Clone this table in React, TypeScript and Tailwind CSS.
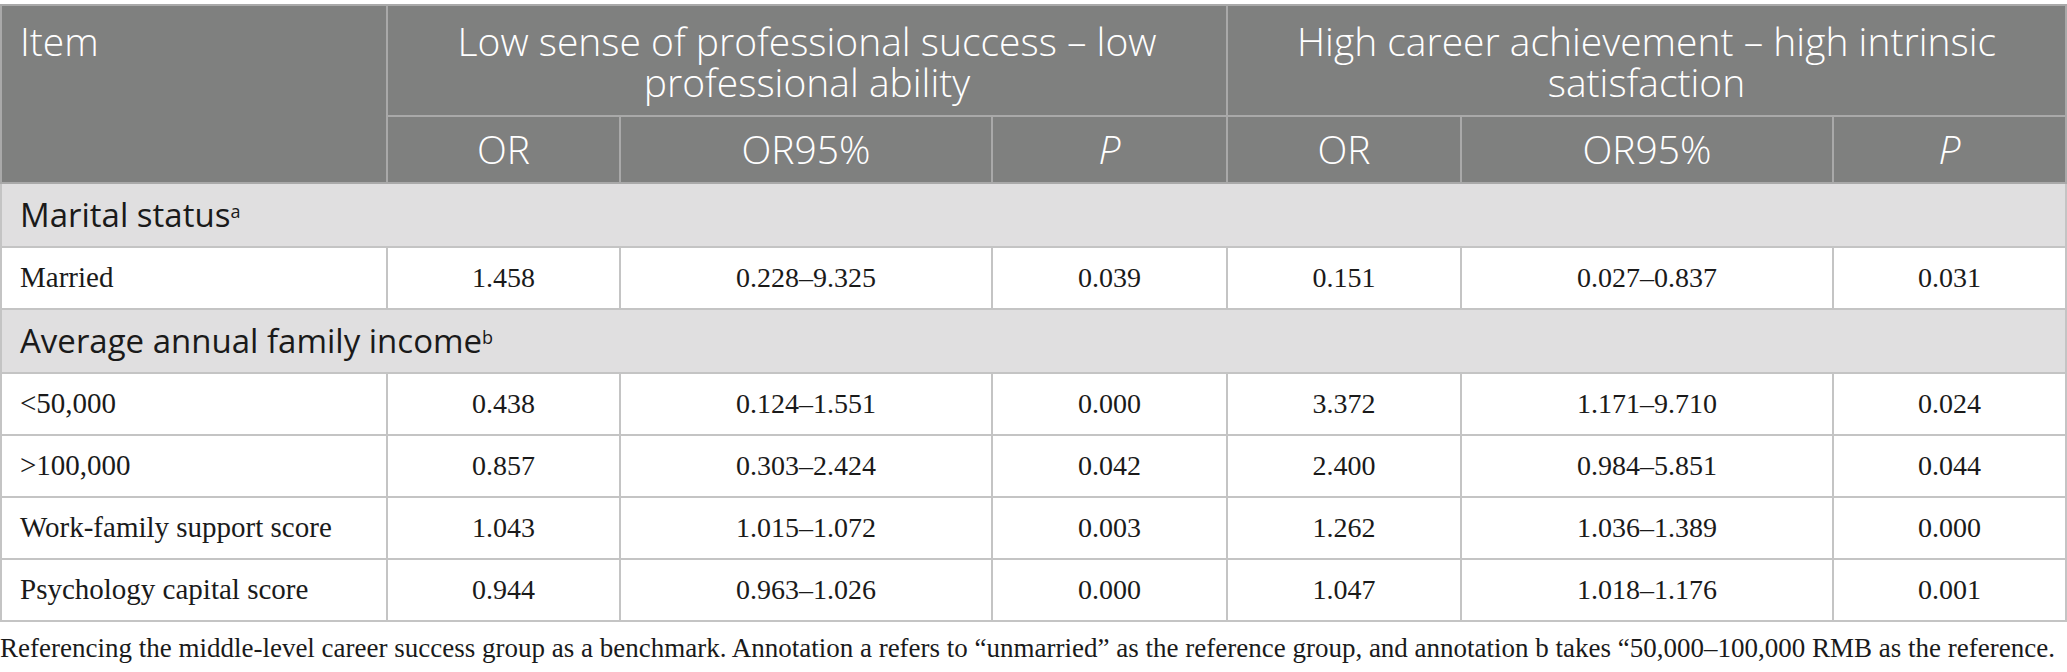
const headerFont = { fontFamily: '"Open Sans", "Liberation Sans", sans-serif' };
const serifFont = { fontFamily: '"Liberation Serif", "Times New Roman", serif' };

type Row = { label: string; v: string[] };

const marital: Row[] = [
  { label: "Married", v: ["1.458", "0.228–9.325", "0.039", "0.151", "0.027–0.837", "0.031"] },
];

const income: Row[] = [
  { label: "<50,000", v: ["0.438", "0.124–1.551", "0.000", "3.372", "1.171–9.710", "0.024"] },
  { label: ">100,000", v: ["0.857", "0.303–2.424", "0.042", "2.400", "0.984–5.851", "0.044"] },
  { label: "Work-family support score", v: ["1.043", "1.015–1.072", "0.003", "1.262", "1.036–1.389", "0.000"] },
  { label: "Psychology capital score", v: ["0.944", "0.963–1.026", "0.000", "1.047", "1.018–1.176", "0.001"] },
];

const DataRow = ({ row }: { row: Row }) => (
  <tr className="h-[62px] bg-white text-[28px] text-[#1a1a1a]" style={serifFont}>
    <td className="border-2 border-[#c4c4c4] pl-[18px] text-left text-[29px]">{row.label}</td>
    {row.v.map((x, i) => (
      <td key={i} className="border-2 border-[#c4c4c4] text-center">
        {x}
      </td>
    ))}
  </tr>
);

const GroupRow = ({ label, sup }: { label: string; sup: string }) => (
  <tr className="h-[64px] bg-[#e0dfe0] text-[33px] text-[#1a1a1a]" style={headerFont}>
    <td colSpan={7} className="border-2 border-[#c4c4c4] pl-[18px] text-left">
      {label}
      <sup className="text-[18px]">{sup}</sup>
    </td>
  </tr>
);

export default function App() {
  return (
    <div className="w-[2067px] h-[672px] bg-white pt-[4px]">
      <table className="w-[2065px] table-fixed border-collapse">
        <colgroup>
          <col className="w-[386px]" />
          <col className="w-[233px]" />
          <col className="w-[372px]" />
          <col className="w-[235px]" />
          <col className="w-[234px]" />
          <col className="w-[372px]" />
          <col className="w-[233px]" />
        </colgroup>
        <thead className="bg-[#7f807f] text-white text-[39px] font-light" style={headerFont}>
          <tr className="h-[111px]">
            <td rowSpan={2} className="border-2 border-[#a9a9a9] pl-[18px] pt-[14px] align-top text-left leading-[41px]">
              Item
            </td>
            <td colSpan={3} className="border-2 border-[#a9a9a9] px-[20px] pt-[14px] align-top text-center leading-[41px]">
              Low sense of professional success – low professional ability
            </td>
            <td colSpan={3} className="border-2 border-[#a9a9a9] px-[20px] pt-[14px] align-top text-center leading-[41px]">
              High career achievement – high intrinsic satisfaction
            </td>
          </tr>
          <tr className="h-[67px]">
            <td className="border-2 border-[#a9a9a9] text-center">OR</td>
            <td className="border-2 border-[#a9a9a9] text-center">OR95%</td>
            <td className="border-2 border-[#a9a9a9] text-center italic">P</td>
            <td className="border-2 border-[#a9a9a9] text-center">OR</td>
            <td className="border-2 border-[#a9a9a9] text-center">OR95%</td>
            <td className="border-2 border-[#a9a9a9] text-center italic">P</td>
          </tr>
        </thead>
        <tbody>
          <GroupRow label="Marital status" sup="a" />
          {marital.map((r) => (
            <DataRow key={r.label} row={r} />
          ))}
          <GroupRow label="Average annual family income" sup="b" />
          {income.map((r) => (
            <DataRow key={r.label} row={r} />
          ))}
        </tbody>
      </table>
      <p className="mt-[6px] text-[27px] text-[#1a1a1a] whitespace-nowrap" style={serifFont}>
        Referencing the middle-level career success group as a benchmark. Annotation a refers to “unmarried” as the reference group, and annotation b takes “50,000–100,000 RMB as the reference.
      </p>
    </div>
  );
}
